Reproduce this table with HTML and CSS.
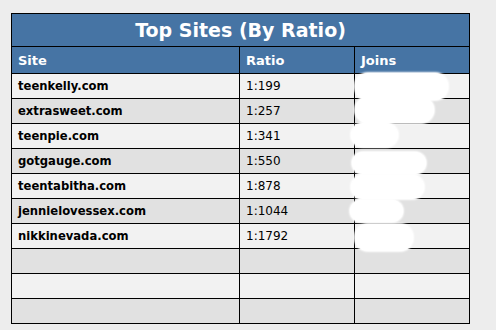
FILE: index.html
```html
<!DOCTYPE html>
<html>
<head>
<meta charset="utf-8">
<link rel="stylesheet" href="styles.css">
</head>
<body>
<div class="wrap">
  <table class="sites">
    <colgroup><col class="c1"><col class="c2"><col class="c3"></colgroup>
    <thead>
      <tr class="title"><th colspan="3">Top Sites (By Ratio)</th></tr>
      <tr class="head"><th>Site</th><th>Ratio</th><th>Joins</th></tr>
    </thead>
    <tbody>
      <tr><td class="site">teenkelly.com</td><td>1:199</td><td></td></tr>
      <tr><td class="site">extrasweet.com</td><td>1:257</td><td></td></tr>
      <tr><td class="site">teenpie.com</td><td>1:341</td><td></td></tr>
      <tr><td class="site">gotgauge.com</td><td>1:550</td><td></td></tr>
      <tr><td class="site">teentabitha.com</td><td>1:878</td><td></td></tr>
      <tr><td class="site">jennielovessex.com</td><td>1:1044</td><td></td></tr>
      <tr><td class="site">nikkinevada.com</td><td>1:1792</td><td></td></tr>
      <tr><td></td><td></td><td></td></tr>
      <tr><td></td><td></td><td></td></tr>
      <tr><td></td><td></td><td></td></tr>
    </tbody>
  </table>
  <span class="blob b1"></span>
  <span class="blob b2"></span>
  <span class="blob b3"></span>
  <span class="blob b4"></span>
  <span class="blob b5"></span>
  <span class="blob b6"></span>
  <span class="blob b7"></span>
</div>
</body>
</html>
```
FILE: styles.css
```css
html, body {
  margin: 0;
  padding: 0;
  background: #ededed;
}
body {
  padding: 13px 0 0 11px;
  font-family: "DejaVu Sans", Verdana, sans-serif;
}
.wrap {
  position: relative;
  width: 459px;
}
.sites {
  border-collapse: collapse;
  width: 459px;
  table-layout: fixed;
}
.c1 { width: 228px; }
.c2 { width: 115px; }
.c3 { width: 115px; }
.sites th, .sites td {
  border: 1px solid #000;
  padding: 0 0 0 6px;
  text-align: left;
  white-space: nowrap;
}
.title th {
  background: #4674a4;
  color: #fff;
  font-size: 19px;
  font-weight: bold;
  text-align: center;
  height: 32px;
  padding: 0;
}
.head th {
  background: #4674a4;
  color: #fff;
  font-size: 13px;
  font-weight: bold;
  height: 26px;
}
.sites td {
  height: 24px;
  font-size: 12px;
  color: #000;
}
.sites tbody tr:nth-child(odd) td { background: #f2f2f2; }
.sites tbody tr:nth-child(even) td { background: #e1e1e1; }
.sites td.site { font-weight: bold; font-size: 11.6px; }
.blob {
  position: absolute;
  background: #fff;
  border-radius: 13px;
  box-shadow: 0 0 2px 1px #fff;
}
.b1 { left: 344px; top: 60px; width: 93px; height: 27px; }
.b2 { left: 344px; top: 84px; width: 79px; height: 26px; }
.b3 { left: 340px; top: 110px; width: 47px; height: 24px; }
.b4 { left: 341px; top: 139px; width: 74px; height: 22px; }
.b5 { left: 340px; top: 162px; width: 73px; height: 24px; }
.b6 { left: 339px; top: 187px; width: 53px; height: 22px; }
.b7 { left: 344px; top: 211px; width: 58px; height: 27px; }
```
